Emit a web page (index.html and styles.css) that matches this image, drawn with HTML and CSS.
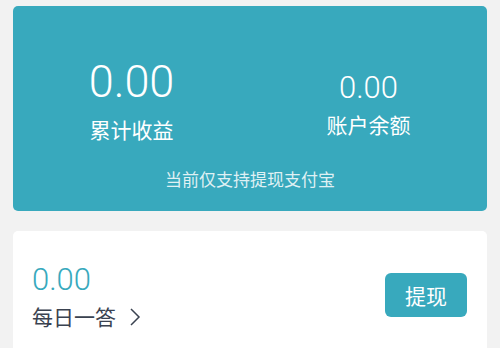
FILE: index.html
```html
<!DOCTYPE html>
<html lang="zh-CN">
<head>
<meta charset="utf-8">
<link rel="stylesheet" href="styles.css">
</head>
<body>
<div class="page">
  <section class="summary">
    <div class="stats">
      <div class="stat stat-main">
        <div class="amount amount-lg">0.00</div>
        <div class="label label-main">累计收益</div>
      </div>
      <div class="stat stat-side">
        <div class="amount amount-md">0.00</div>
        <div class="label label-side">账户余额</div>
      </div>
    </div>
    <div class="note">当前仅支持提现支付宝</div>
  </section>
  <section class="daily">
    <div class="daily-info">
      <div class="daily-amount">0.00</div>
      <div class="daily-link">
        <span class="daily-title">每日一答</span>
        <svg class="chevron" width="12" height="18" viewBox="0 0 12 18"><polyline points="2,1 10,9 2,17" fill="none" stroke="#3a4250" stroke-width="1.5" stroke-linejoin="miter"/></svg>
      </div>
    </div>
    <button class="withdraw">提现</button>
  </section>
</div>
</body>
</html>
```
FILE: styles.css
```css
html, body {
  margin: 0;
  padding: 0;
  background: #f2f2f2;
  width: 500px;
  height: 348px;
  overflow: hidden;
}
.page {
  padding: 6px 13px 0;
  font-family: Roboto, "Noto Sans CJK SC", sans-serif;
}
.summary {
  background: #38a9bd;
  border-radius: 5px;
  height: 205px;
  color: #fff;
  box-sizing: border-box;
  padding-top: 53px;
}
.stats {
  display: flex;
  align-items: flex-start;
}
.stat {
  flex: 1;
  display: flex;
  flex-direction: column;
  align-items: center;
}
.stat-side {
  margin-top: 13px;
}
.amount {
  font-weight: 300;
  line-height: 1;
}
.amount-lg { font-size: 45px; }
.amount-md { font-size: 31px; }
.label {
  font-family: "Noto Sans CJK SC", sans-serif;
  font-size: 21px;
  line-height: 1;
}
.label-main { margin-top: 15px; }
.label-side { margin-top: 11px; }
.note {
  font-family: "Noto Sans CJK SC", sans-serif;
  font-size: 17px;
  line-height: 1;
  text-align: center;
  color: rgba(255,255,255,0.85);
  margin-top: 30px;
}
.daily {
  margin-top: 20px;
  background: #fff;
  border-radius: 5px 5px 0 0;
  height: 130px;
  box-sizing: border-box;
  padding: 33px 20px 0 19px;
  display: flex;
  align-items: flex-start;
  justify-content: space-between;
}
.daily-amount {
  font-size: 31px;
  font-weight: 300;
  line-height: 1;
  color: #38a9bd;
}
.daily-link {
  display: flex;
  align-items: center;
  margin-top: 11px;
  gap: 13px;
}
.daily-title {
  font-family: "Noto Sans CJK SC", sans-serif;
  font-size: 21px;
  line-height: 1;
  color: #3a4250;
}
.chevron { display: block; }
.withdraw {
  margin-top: 9px;
  width: 82px;
  height: 44px;
  border: none;
  border-radius: 6px;
  background: #38a9bd;
  color: #fff;
  font-family: "Noto Sans CJK SC", sans-serif;
  font-size: 21px;
  padding: 0;
}
```
